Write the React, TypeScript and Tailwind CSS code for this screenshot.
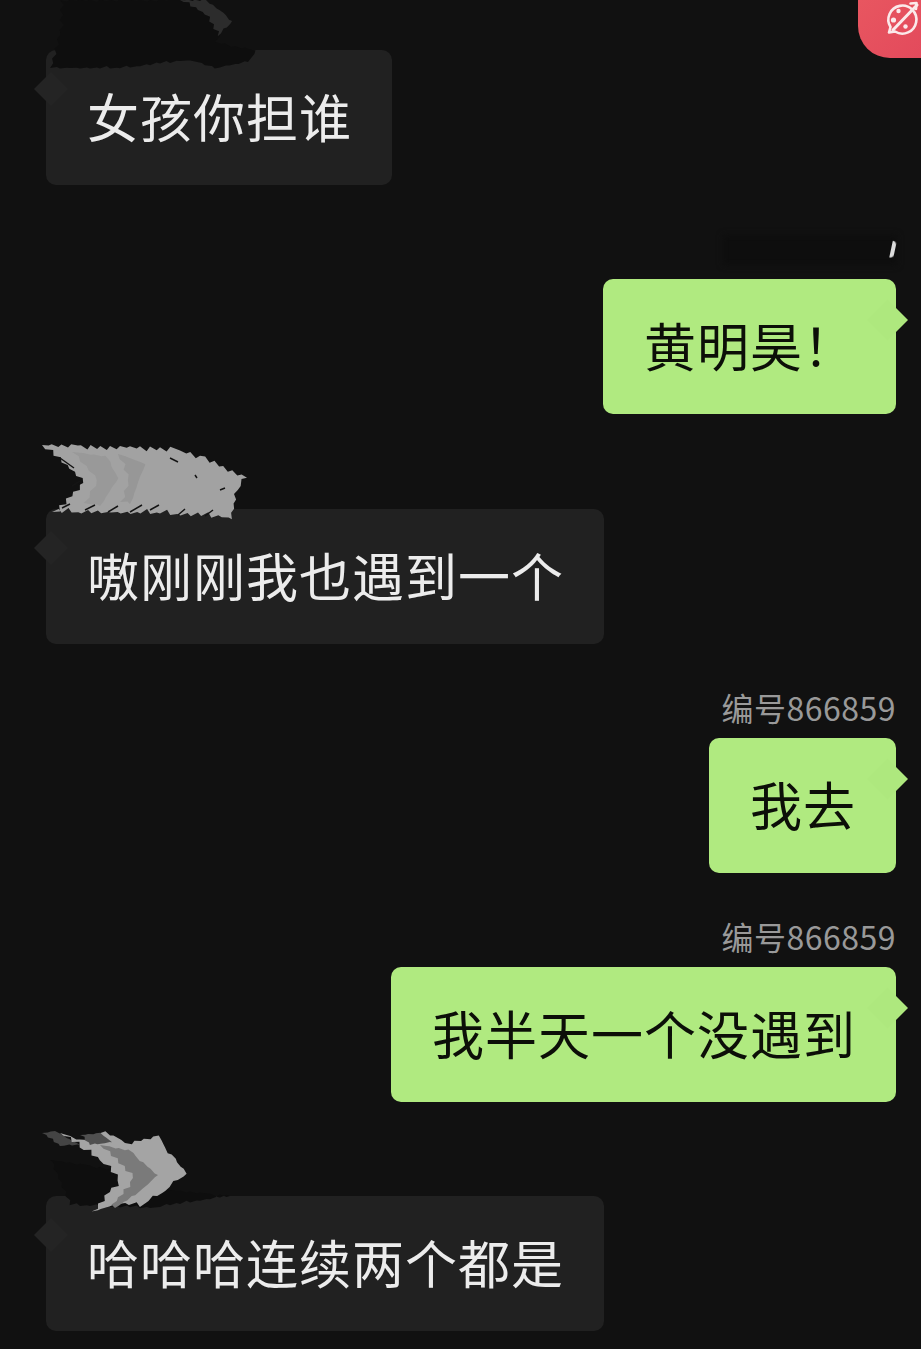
import React, { ReactNode } from "react";

const FONT = "font-['Noto_Sans_CJK_SC','Noto_Sans',sans-serif]";

// 折れ線の各辺にギザギザを足す（マスク部分の筆跡っぽさ用）
function jag(points: number[][], amp = 3, step = 7) {
    let d = "";
    let n = 1;
    points.forEach(([x, y], i) => {
        const [nx, ny] = points[(i + 1) % points.length];
        const len = Math.hypot(nx - x, ny - y);
        const count = Math.max(1, Math.round(len / step));
        for (let k = 0; k < count; k++) {
            n = (n * 31 + 17) % 101;
            const t = k / count;
            // 鋸歯にするため片側だけ鋭く飛ばす
            const off = k % 2 ? ((n % 10) / 9) * amp : -((n % 4) / 4) * amp * 0.4;
            const skew = k % 2 ? step * 0.35 : 0;
            const px = x + (nx - x) * t + (-(ny - y) / len) * off + skew;
            const py = y + (ny - y) * t + ((nx - x) / len) * off;
            d += `${d ? "L" : "M"}${px.toFixed(1)} ${py.toFixed(1)}`;
        }
    });
    return d + "Z";
}

const Bubble = ({ side, children, scribble }: { side: "left" | "right"; children: ReactNode; scribble?: ReactNode }) => (
    <div className={side === "left" ? "flex justify-start pl-[46px]" : "flex justify-end pr-[25px]"}>
        <div
            className={
                side === "left"
                    ? "relative h-[135px] rounded-[10px] bg-[#212121] pl-[41px] pr-[40px] flex items-center text-[52px] tracking-[1px] text-[#ececec]"
                    : "relative h-[135px] rounded-[10px] bg-[#b0ea80] pl-[41px] pr-[40px] flex items-center text-[52px] tracking-[1px] text-[#0c0f08]"
            }
        >
            {side === "left" ? (
                <div className="absolute left-[-7px] top-[39px] h-[24px] w-[24px] -translate-y-1/2 rotate-45 bg-[#242424]" />
            ) : (
                <div className="absolute right-[-5.5px] top-[41px] h-[29px] w-[29px] -translate-y-1/2 rotate-45 bg-[#aee87e]" />
            )}
            <span className="relative -mt-[3px] whitespace-nowrap">{children}</span>
            {scribble}
        </div>
    </div>
);

const Label = ({ text }: { text?: string }) => (
    <div className="h-[94px] pr-[25px] flex items-end justify-end pb-[10px]">
        {text && <span className="text-[32px] leading-[42px] tracking-[0.5px] text-[#999999]">{text}</span>}
    </div>
);

const TopScribble = () => (
    <svg className="absolute left-[-46px] top-[-50px]" width="300" height="80" viewBox="0 0 300 80">
        <path
            d={jag([[50, 68], [60, 30], [60, 0], [205, 0], [225, 22], [215, 42], [255, 50], [248, 62], [215, 68], [190, 60], [120, 68]], 2, 5)}
            fill="#0e0e0e"
        />
        <path d={jag([[180, 0], [206, 0], [232, 21], [218, 36], [205, 14]], 2, 4)} fill="#2c2c2c" />
    </svg>
);

const MiddleScribble = () => (
    <svg className="absolute left-[-46px] top-[-79px]" width="270" height="100" viewBox="0 430 270 100">
        <path d={jag([[42, 445], [110, 446], [170, 448], [205, 457], [246, 477], [237, 490], [232, 518], [160, 513], [52, 512], [84, 482], [62, 462]], 4, 5)} fill="#a2a2a2" />
        <path d={jag([[72, 452], [105, 456], [118, 478], [100, 506], [84, 503], [97, 480]], 1.5, 6)} fill="#999999" />
        <path d={jag([[118, 454], [145, 464], [138, 482], [130, 504], [120, 502], [128, 480]], 1.5, 6)} fill="#979797" />
        <path
            d="M62 508l8-4M85 510l10-5M108 512l10-6M130 512l12-7M150 510l9-5M178 515l7-6M205 516l8-6M60 458l14 10M72 486l8-5M170 458l8 4M195 475l2 3M220 490l5-2"
            stroke="#141414"
            strokeWidth="1.5"
        />
    </svg>
);

const BottomScribble = () => (
    <svg className="absolute left-[-46px] top-[-76px]" width="270" height="100" viewBox="0 1120 270 100">
        <path d={jag([[50, 1160], [120, 1170], [170, 1190], [230, 1196], [150, 1208], [70, 1205]], 2, 5)} fill="#0e0e0e" />
        <path d={jag([[42, 1133], [55, 1131], [80, 1145], [60, 1146]], 1, 4)} fill="#444444" />
        <path d={jag([[60, 1133], [80, 1140], [105, 1132], [125, 1143], [158, 1136], [165, 1148], [186, 1173], [165, 1190], [140, 1206], [118, 1203], [92, 1212], [118, 1180], [100, 1160], [80, 1147]], 3, 5)} fill="#a4a4a4" />
        <path d={jag([[80, 1135], [100, 1133], [112, 1142], [90, 1145]], 1, 4)} fill="#505050" />
        <path d={jag([[100, 1145], [128, 1150], [158, 1175], [135, 1195], [115, 1208], [112, 1205], [133, 1178]], 2, 5)} fill="#7a7a7a" />
    </svg>
);

const PlanetIcon = () => (
    <svg width="36" height="40" viewBox="0 0 36 40" fill="none" stroke="#fbe9ea" strokeWidth="2.6" strokeLinecap="round" strokeLinejoin="round">
        <path d="M6 31.5l1.5-5.5A14 14 0 1 1 12 30.5z" />
        <path d="M10 29L34 4" strokeWidth="3" />
        <path d="M27.5 2.5L33.5 2l-.5 6" />
        <circle cx="15.5" cy="10" r="2.2" fill="#fbe9ea" stroke="none" />
        <circle cx="10.5" cy="19" r="2.6" fill="#fbe9ea" stroke="none" />
        <circle cx="22.5" cy="25.5" r="2.2" fill="#fbe9ea" stroke="none" />
    </svg>
);

export default function App() {
    return (
        <div className={`relative h-[1349px] overflow-hidden bg-[#111111] pt-[50px] ${FONT}`}>
            {/* 右上の赤いバッジ */}
            <div className="absolute right-0 top-0 h-[58px] w-[63px] rounded-bl-[32px] bg-gradient-to-br from-[#e85660] to-[#e34a5c] overflow-hidden pl-[25px] pt-[1px]">
                <PlanetIcon />
            </div>

            <Bubble side="left" scribble={<TopScribble />}>女孩你担谁</Bubble>
            <div className="relative h-[94px]">
                <div className="absolute right-[24px] top-[50px] h-[30px] w-[174px] bg-[#0e0e0e] blur-[3px]" />
                <div className="absolute right-[26px] top-[56px] h-[17px] w-[4px] rotate-12 rounded-r-full bg-[#dddddd] blur-[0.5px]" />
            </div>
            <Bubble side="right">黄明昊！</Bubble>
            <div className="h-[95px]" />
            <Bubble side="left" scribble={<MiddleScribble />}>嗷刚刚我也遇到一个</Bubble>
            <Label text="编号866859" />
            <Bubble side="right">我去</Bubble>
            <Label text="编号866859" />
            <Bubble side="right">我半天一个没遇到</Bubble>
            <Label />
            <Bubble side="left" scribble={<BottomScribble />}>哈哈哈连续两个都是</Bubble>
        </div>
    );
}
